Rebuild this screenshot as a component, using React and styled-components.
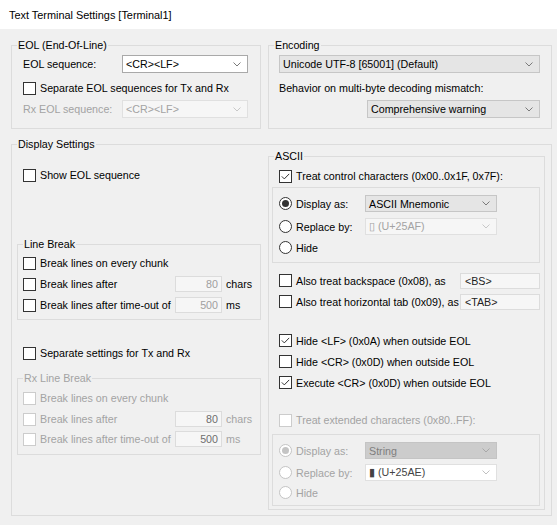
import React from "react";
import styled, { createGlobalStyle } from "styled-components";

const GRAY = "#a3a3a3";
const LINE = "#dcdcdc";

const GlobalStyle = createGlobalStyle`
  html, body {
    margin: 0;
    padding: 0;
    background: #f0f0f0;
  }
  body {
    font-family: "Liberation Sans", Arial, sans-serif;
    font-size: 10.7px;
    color: #000;
  }
  *, *::before, *::after {
    box-sizing: border-box;
  }
`;

const Window = styled.div`
  width: 557px;
  height: 525px;
  background: #f0f0f0;
  overflow: hidden;
`;

const TitleBar = styled.div`
  height: 29px;
  background: #fff;
  padding-left: 9px;
  display: flex;
  align-items: center;
  font-size: 10.9px;
`;

const Body = styled.div`
  display: flex;
  flex-direction: column;
  gap: 9px;
  padding: 10px 0 0 11px;
`;

const TopRow = styled.div`
  display: flex;
  gap: 7px;
`;

const Group = styled.fieldset`
  margin: 0;
  padding: 0;
  min-width: 0;
  flex-shrink: 0;
  border: 1px solid ${LINE};
  width: ${(p) => p.$w}px;
  height: ${(p) => p.$h}px;
  margin-top: ${(p) => p.$mt || 0}px;
`;

const Legend = styled.legend`
  padding: 0 1px;
  margin-left: 5px;
  line-height: 12px;
  color: ${(p) => (p.$disabled ? GRAY : "#000")};
`;

const GroupBody = styled.div`
  display: flex;
  flex-direction: column;
  padding: ${(p) => p.$pad || "0"};
`;

const Panel = styled.div`
  border: 1px solid ${LINE};
  height: ${(p) => p.$h}px;
  margin-top: ${(p) => p.$mt || 0}px;
  padding: 0 0 0 6px;
  display: flex;
  flex-direction: column;
`;

const Columns = styled.div`
  display: flex;
  align-items: flex-start;
  gap: 7px;
  padding: 0 6px 0 5px;
`;

const LeftColumn = styled.div`
  width: 244px;
  display: flex;
  flex-direction: column;
`;

const Row = styled.div`
  display: flex;
  align-items: center;
  height: ${(p) => p.$h || 18}px;
  margin-top: ${(p) => p.$mt || 0}px;
  padding-left: ${(p) => p.$indent || 0}px;
  justify-content: ${(p) => (p.$end ? "flex-end" : "flex-start")};
  padding-right: ${(p) => p.$pr || 0}px;
  white-space: nowrap;
  color: ${(p) => (p.$disabled ? GRAY : "#000")};
`;

const Label = styled.span`
  flex-shrink: 0;
  width: ${(p) => (p.$w ? `${p.$w}px` : "auto")};
  color: ${(p) => (p.$disabled ? GRAY : "inherit")};
`;

const CheckLabel = styled.span`
  display: inline-flex;
  align-items: center;
  gap: 4px;
  flex-shrink: 0;
  width: ${(p) => (p.$w ? `${p.$w}px` : "auto")};
  color: ${(p) => (p.$disabled ? GRAY : "#000")};
`;

const CheckBox = styled.span`
  width: 13px;
  height: 13px;
  flex-shrink: 0;
  border: 1px solid ${(p) => (p.$disabled ? "#cccccc" : "#333")};
  background: #fff;
  display: flex;
  align-items: center;
  justify-content: center;
`;

const RadioCircle = styled.span`
  width: 13px;
  height: 13px;
  flex-shrink: 0;
  border-radius: 50%;
  border: 1px solid ${(p) => (p.$disabled ? "#c4c4c4" : "#333")};
  background: #fff;
  display: flex;
  align-items: center;
  justify-content: center;

  &::after {
    content: "";
    display: ${(p) => (p.$checked ? "block" : "none")};
    width: 7px;
    height: 7px;
    border-radius: 50%;
    background: ${(p) => (p.$disabled ? "#c4c4c4" : "#333")};
  }
`;

const comboColors = {
  edit: { bg: "#fff", border: "#a9a9a9", color: "#000", arrow: "#7a7a7a" },
  button: { bg: "#e5e5e5", border: "#c6c6c6", color: "#000", arrow: "#7a7a7a" },
  off: { bg: "#f6f6f6", border: "#e0e0e0", color: GRAY, arrow: "#c8c8c8" },
  offButton: { bg: "#cccccc", border: "#c4c4c4", color: "#7e7e7e", arrow: "#a8a8a8" },
  offEdit: { bg: "#fff", border: "#e0e0e0", color: "#444", arrow: "#c0c0c0" },
};

const ComboBox = styled.div`
  width: ${(p) => p.$w}px;
  height: ${(p) => p.$h || 18}px;
  flex-shrink: 0;
  display: flex;
  align-items: center;
  justify-content: space-between;
  padding: 0 6px 0 3px;
  background: ${(p) => comboColors[p.$kind].bg};
  border: 1px solid ${(p) => comboColors[p.$kind].border};
  color: ${(p) => comboColors[p.$kind].color};
`;

const NumBox = styled.div`
  width: 47px;
  height: 16px;
  flex-shrink: 0;
  border: 1px solid ${LINE};
  background: #f6f6f6;
  text-align: right;
  padding-right: 3px;
  line-height: 14px;
  color: ${(p) => p.$color};
`;

const TextBox = styled.div`
  width: 80px;
  height: 16px;
  flex-shrink: 0;
  border: 1px solid ${LINE};
  background: #f6f6f6;
  padding-left: 4px;
  line-height: 14px;
  color: #222;
`;

const Unit = styled.span`
  margin-left: 4px;
  color: ${(p) => (p.$disabled ? GRAY : "#000")};
`;

const Chevron = ({ color }) => (
  <svg width="8" height="5" viewBox="0 0 8 5">
    <polyline points="0.5,0.5 4,4 7.5,0.5" fill="none" stroke={color} strokeWidth="1" />
  </svg>
);

const Combo = ({ kind = "edit", w, h, children }) => (
  <ComboBox $kind={kind} $w={w} $h={h}>
    <span>{children}</span>
    <Chevron color={comboColors[kind].arrow} />
  </ComboBox>
);

const Check = ({ checked, disabled, w, children }) => (
  <CheckLabel $disabled={disabled} $w={w}>
    <CheckBox $disabled={disabled}>
      {checked && (
        <svg width="9" height="7" viewBox="0 0 9 7">
          <polyline points="0.8,3.4 3.3,5.9 8.2,0.9" fill="none" stroke="#333" strokeWidth="1" />
        </svg>
      )}
    </CheckBox>
    {children}
  </CheckLabel>
);

const Radio = ({ checked, disabled, w, children }) => (
  <CheckLabel $disabled={disabled} $w={w}>
    <RadioCircle $checked={checked} $disabled={disabled} />
    {children}
  </CheckLabel>
);

const LineBreakRows = ({ disabled, numColor, gaps }) => (
  <>
    <Row $mt={gaps[0]}>
      <Check disabled={disabled}>Break lines on every chunk</Check>
    </Row>
    <Row $mt={gaps[1]}>
      <Check disabled={disabled} w={152}>Break lines after</Check>
      <NumBox $color={numColor}>80</NumBox>
      <Unit $disabled={disabled}>chars</Unit>
    </Row>
    <Row $mt={gaps[2]}>
      <Check disabled={disabled} w={152}>Break lines after time-out of</Check>
      <NumBox $color={numColor}>500</NumBox>
      <Unit $disabled={disabled}>ms</Unit>
    </Row>
  </>
);

export default function App() {
  return (
    <Window>
      <GlobalStyle />
      <TitleBar>Text Terminal Settings [Terminal1]</TitleBar>
      <Body>
        <TopRow>
          <Group $w={250} $h={90}>
            <Legend>EOL (End-Of-Line)</Legend>
            <GroupBody $pad="0 0 0 11px">
              <Row $mt={4}>
                <Label $w={99}>EOL sequence:</Label>
                <Combo w={126}>&lt;CR&gt;&lt;LF&gt;</Combo>
              </Row>
              <Row $mt={6}>
                <Check>Separate EOL sequences for Tx and Rx</Check>
              </Row>
              <Row $mt={3}>
                <Label $w={99} $disabled>Rx EOL sequence:</Label>
                <Combo kind="off" w={126}>&lt;CR&gt;&lt;LF&gt;</Combo>
              </Row>
            </GroupBody>
          </Group>

          <Group $w={284} $h={90}>
            <Legend>Encoding</Legend>
            <GroupBody $pad="0 0 0 10px">
              <Row $mt={4}>
                <Combo kind="button" w={261}>Unicode UTF-8 [65001] (Default)</Combo>
              </Row>
              <Row $mt={6}>
                <Label>Behavior on multi-byte decoding mismatch:</Label>
              </Row>
              <Row $mt={3} $end $pr={11}>
                <Combo kind="button" w={173}>Comprehensive warning</Combo>
              </Row>
            </GroupBody>
          </Group>
        </TopRow>

        <Group $w={541} $h={378}>
          <Legend>Display Settings</Legend>
          <Columns>
            <LeftColumn>
              <Row $mt={16} $indent={6}>
                <Check>Show EOL sequence</Check>
              </Row>

              <Group $w={244} $h={82} $mt={54}>
                <Legend>Line Break</Legend>
                <GroupBody $pad="0 0 0 5px">
                  <LineBreakRows numColor="#a0a0a0" gaps={[4, 3, 3]} />
                </GroupBody>
              </Group>

              <Row $mt={24} $indent={6}>
                <Check>Separate settings for Tx and Rx</Check>
              </Row>

              <Group $w={244} $h={83} $mt={10}>
                <Legend $disabled>Rx Line Break</Legend>
                <GroupBody $pad="0 0 0 5px">
                  <LineBreakRows disabled numColor="#6e6e6e" gaps={[5, 3, 2]} />
                </GroupBody>
              </Group>
            </LeftColumn>

            <Group $w={277} $h={360}>
              <Legend>ASCII</Legend>
              <GroupBody $pad="0 4px 0 3px">
                <Row $mt={6} $h={16} $indent={7}>
                  <Check checked>Treat control characters (0x00..0x1F, 0x7F):</Check>
                </Row>
                <Panel $h={76} $mt={3}>
                  <Row $mt={7} $h={17}>
                    <Radio checked w={86}>Display as:</Radio>
                    <Combo kind="button" w={132} h={17}>ASCII Mnemonic</Combo>
                  </Row>
                  <Row $mt={6} $h={17}>
                    <Radio w={86}>Replace by:</Radio>
                    <Combo kind="off" w={132} h={17}>▯ (U+25AF)</Combo>
                  </Row>
                  <Row $mt={4} $h={17}>
                    <Radio>Hide</Radio>
                  </Row>
                </Panel>

                <Row $mt={9} $h={17} $indent={7}>
                  <Check w={181}>Also treat backspace (0x08), as</Check>
                  <TextBox>&lt;BS&gt;</TextBox>
                </Row>
                <Row $mt={4} $h={17} $indent={7}>
                  <Check w={181}>Also treat horizontal tab (0x09), as</Check>
                  <TextBox>&lt;TAB&gt;</TextBox>
                </Row>

                <Row $mt={22} $h={17} $indent={7}>
                  <Check checked>Hide &lt;LF&gt; (0x0A) when outside EOL</Check>
                </Row>
                <Row $mt={4} $h={17} $indent={7}>
                  <Check>Hide &lt;CR&gt; (0x0D) when outside EOL</Check>
                </Row>
                <Row $mt={4} $h={17} $indent={7}>
                  <Check checked>Execute &lt;CR&gt; (0x0D) when outside EOL</Check>
                </Row>

                <Row $mt={21} $h={16} $indent={7}>
                  <Check disabled>Treat extended characters (0x80..FF):</Check>
                </Row>
                <Panel $h={72} $mt={6}>
                  <Row $mt={7} $h={17}>
                    <Radio checked disabled w={86}>Display as:</Radio>
                    <Combo kind="offButton" w={132} h={17}>String</Combo>
                  </Row>
                  <Row $mt={5} $h={17}>
                    <Radio disabled w={86}>Replace by:</Radio>
                    <Combo kind="offEdit" w={132} h={17}>▮ (U+25AE)</Combo>
                  </Row>
                  <Row $mt={3} $h={17}>
                    <Radio disabled>Hide</Radio>
                  </Row>
                </Panel>
              </GroupBody>
            </Group>
          </Columns>
        </Group>
      </Body>
    </Window>
  );
}
